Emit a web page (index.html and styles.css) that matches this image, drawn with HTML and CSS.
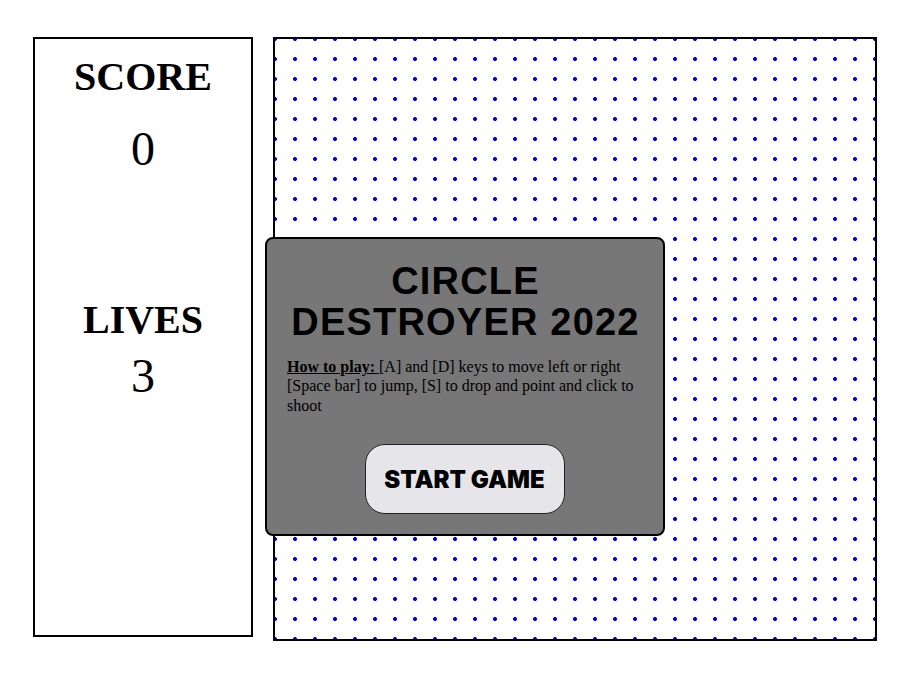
FILE: index.html
```html
<!DOCTYPE html>
<html lang="en">
<head>
<meta charset="utf-8">
<title>Circle Destroyer 2022</title>
<link rel="stylesheet" href="styles.css">
</head>
<body>
<main class="layout">
  <aside class="stats">
    <div class="stat-label">SCORE</div>
    <div class="stat-value score-value">0</div>
    <div class="stat-label lives-label">LIVES</div>
    <div class="stat-value lives-value">3</div>
  </aside>
  <section class="board">
    <div class="menu">
      <h1 class="title">CIRCLE<br>DESTROYER 2022</h1>
      <p class="howto"><b class="howto-key">How to play: </b>[A] and [D] keys to move left or right<br>[Space bar] to jump, [S] to drop and point and click to shoot</p>
      <div class="actions"><button class="start" type="button">START GAME</button></div>
    </div>
  </section>
</main>
</body>
</html>
```
FILE: styles.css
```css
* { box-sizing: border-box; }
html, body { margin: 0; padding: 0; background: #fff; }
body { font-family: "Liberation Serif", "Times New Roman", serif; color: #000; }

.layout {
  display: flex;
  align-items: flex-start;
  gap: 20px;
  padding: 37px 0 0 33px;
}

.stats {
  width: 220px;
  height: 600px;
  border: 2px solid #000;
  padding-top: 16px;
  text-align: center;
}
.stat-label {
  font-size: 40px;
  font-weight: bold;
  line-height: 44px;
}
.stat-value {
  font-size: 48px;
  line-height: 52px;
}
.score-value { margin-top: 24px; }
.lives-label { margin-top: 123px; }
.lives-value { margin-top: 8px; }

.board {
  position: relative;
  width: 604px;
  height: 604px;
  border: 2px solid #000;
  background-color: #fff;
  background-image: radial-gradient(circle, #0000ff 0, #0000ff 1.6px, rgba(0,0,255,0) 2.3px);
  background-size: 20px 20px;
  background-position: -10px -10px;
}

.menu {
  position: absolute;
  left: -10px;
  top: 198px;
  width: 400px;
  border: 2px solid #000;
  border-radius: 8px;
  background: #777777;
  padding: 22px 20px 20px 20px;
}
.title {
  margin: 0;
  padding-left: 1px;
  font-family: "Liberation Sans", Arial, sans-serif;
  font-weight: bold;
  font-size: 38px;
  letter-spacing: 1.2px;
  line-height: 41.4px;
  text-align: center;
}
.howto {
  margin: 13px 0 0 0;
  font-size: 16px;
  line-height: 19.5px;
}
.howto-key { text-decoration: underline; }
.actions {
  display: flex;
  justify-content: center;
  margin-top: 29px;
}
.start {
  width: 200px;
  height: 70px;
  border: 1px solid #222;
  border-radius: 20px;
  background: #e6e6ea;
  font-family: Inter, "Liberation Sans", sans-serif;
  font-weight: 900;
  font-size: 24px;
  color: #000;
  padding: 0;
  margin-left: -1px;
}
```
